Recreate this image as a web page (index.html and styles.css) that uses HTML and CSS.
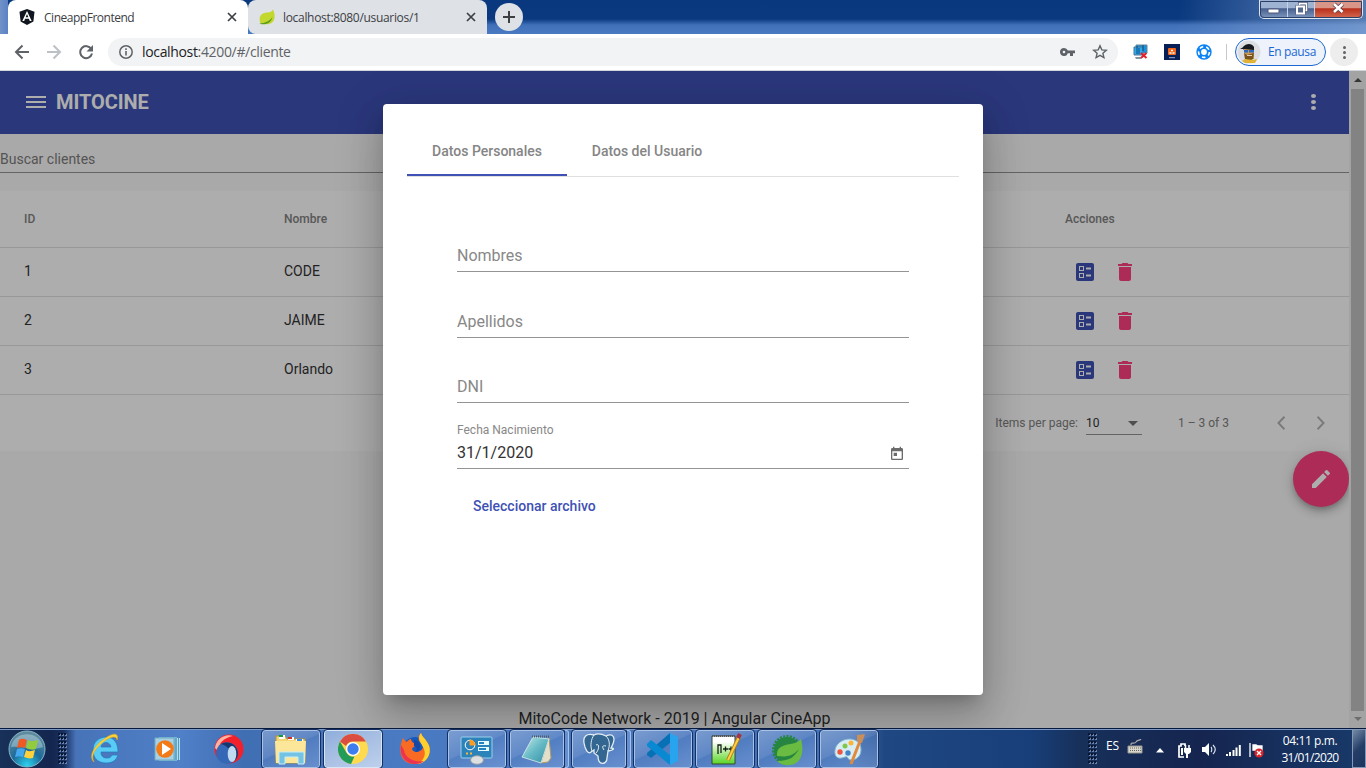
FILE: index.html
```html
<!DOCTYPE html>
<html lang="es">
<head>
<meta charset="utf-8">
<title>CineappFrontend</title>
<link rel="stylesheet" href="styles.css">
</head>
<body>
<svg class="defs" width="0" height="0">
  <defs>
    <symbol id="ballot" viewBox="0 0 24 24"><path fill-rule="evenodd" d="M13 9.500h5v-2h-5v2zm0 7h5v-2h-5v2zm6 4.500H5c-1.100 0-2-.9-2-2V5c0-1.100.9-2 2-2h14c1.100 0 2 .9 2 2v14c0 1.100-.9 2-2 2zM6 11h5V6H6v5zm1-4h3v3H7V7zM6 18h5v-5H6v5zm1-4h3v3H7v-3z"/></symbol>
    <symbol id="trash" viewBox="0 0 24 24"><path d="M6 19c0 1.100.9 2 2 2h8c1.100 0 2-.9 2-2V7H6v12zM19 4h-3.500l-1-1h-5l-1 1H5v2h14V4z"/></symbol>
    <symbol id="close" viewBox="0 0 10 10"><path d="M1 1l8 8M9 1L1 9" fill="none" stroke="#3c4043" stroke-width="1.700"/></symbol>
  </defs>
</svg>

<div class="tabstrip">
  <div class="tab active">
    <svg width="16" height="16" viewBox="0 0 16 16"><path fill="#11151d" d="M8 0l7.500 2.700-1.100 9.700L8 16l-6.400-3.600L.5 2.700z"/><path fill="#fff" fill-rule="evenodd" d="M8 2l4.700 10h-1.900l-.9-2.200H6.100L5.200 12H3.300zM8 5L6.700 8.300h2.600z"/></svg>
    <span class="tab-title t1">CineappFrontend</span>
    <svg class="x" width="10" height="10"><use href="#close"/></svg>
  </div>
  <div class="tab">
    <svg width="16" height="16" viewBox="0 0 16 16"><path fill="#c3d82e" d="M14 .5c2.500 5 2.300 11-1.500 13.500C9 16 5 15 1.500 14.500-.5 9 1 5.500 5 4c4-1 7 0 9-3.500z"/><path d="M.5 14.500c5-.5 10-2 13-6.500-1.500 6-6 8-12 7z" fill="#5d9a20"/></svg>
    <span class="tab-title t2">localhost:8080/usuarios/1</span>
    <svg class="x" width="10" height="10"><use href="#close"/></svg>
  </div>
  <div class="newtab"><svg width="12" height="12" viewBox="0 0 12 12"><path d="M6 0v12M0 6h12" stroke="#3c4043" stroke-width="2"/></svg></div>
  <div class="winbtns">
    <div class="wb min"><svg width="13" height="6" viewBox="0 0 13 6"><rect x="1" y="1" width="11" height="4" rx="1" fill="#fff" stroke="#50597a"/></svg></div>
    <div class="wb max"><svg width="13" height="13" viewBox="0 0 13 13"><path d="M4.500 1.500h7v7h-7z" fill="#7486a8" stroke="#50597a" stroke-width="3"/><path d="M4.500 1.500h7v7h-7z" fill="#7486a8" stroke="#fff" stroke-width="1.500"/><path d="M2 4.500h7v7H2z" fill="#7486a8" stroke="#50597a" stroke-width="3"/><path d="M2 4.500h7v7H2z" fill="#56698f" stroke="#fff" stroke-width="2"/></svg></div>
    <div class="wb cls"><svg width="13" height="12" viewBox="0 0 13 12"><path d="M2 2l8.500 8M10.500 2L2 10" stroke="#60404a" stroke-width="4.200"/><path d="M2 2l8.500 8M10.500 2L2 10" stroke="#fff" stroke-width="2.600"/></svg></div>
  </div>
</div>

<div class="toolbar">
  <svg class="nav" width="16" height="16" viewBox="0 0 16 16"><path d="M15 8H2M8.500 1.500L2 8l6.500 6.500" fill="none" stroke="#5f6368" stroke-width="2"/></svg>
  <svg class="nav" width="16" height="16" viewBox="0 0 16 16"><path d="M1 8h13M7.500 1.500L14 8l-6.500 6.500" fill="none" stroke="#bdc1c6" stroke-width="2"/></svg>
  <svg class="nav" width="16" height="16" viewBox="0 0 16 16"><path d="M13.300 5A6 6 0 1 0 14 9.500" fill="none" stroke="#5f6368" stroke-width="2"/><path d="M15 1v6.500H8.500z" fill="#5f6368"/></svg>
  <div class="omnibox">
    <svg width="14" height="14" viewBox="0 0 14 14"><circle cx="7" cy="7" r="6.200" fill="none" stroke="#5f6368" stroke-width="1.500"/><path d="M7 6v4.500M7 3.300v1.700" stroke="#5f6368" stroke-width="1.600"/></svg>
    <span class="url"><b>localhost</b>:4200/#/cliente</span>
    <svg class="key" width="15" height="8" viewBox="0 0 15 8"><path fill="#5f6368" fill-rule="evenodd" d="M4 0a4 4 0 1 0 3.800 5.200H10V8h3V5.200h2V2.600H7.800A4 4 0 0 0 4 0zm0 2.700a1.300 1.300 0 1 1 0 2.600 1.300 1.300 0 0 1 0-2.600z"/></svg>
    <svg width="16" height="16" viewBox="0 0 16 16"><path d="M8 1.800l1.800 4.100 4.500.4-3.400 2.900 1 4.400L8 11.300l-3.900 2.300 1-4.400L1.700 6.300l4.500-.4z" fill="none" stroke="#5f6368" stroke-width="1.400"/></svg>
  </div>
  <svg class="ext1" width="16" height="16" viewBox="0 0 16 16"><path d="M3 1h11v8H3z" fill="#1593df" stroke="#6b8291"/><path d="M1 3h9v8H1z" fill="#2aa9ef" stroke="#4b7795"/><path d="M4 2v8M6 4v6M10 1v6" stroke="#0a4b81"/><path d="M2 13h7l-1 2H3z" fill="#8295a3"/><path d="M8 9l5.500 5M13.500 9L8 14" stroke="#e4202c" stroke-width="2"/></svg>
  <svg class="ext2" width="16" height="16" viewBox="0 0 16 16"><path d="M0 0h16v16H0z" fill="#071e57"/><rect x="4" y="4" width="8" height="7" rx="1" fill="#f46518"/><path d="M5.500 9h2M8.500 9h2M7 6.500h2" stroke="#fff" stroke-width="1.500"/><path d="M5 13.700h6" stroke="#9dabcc"/></svg>
  <svg class="ext3" width="16" height="16" viewBox="0 0 16 16"><circle cx="8" cy="8" r="7.700" fill="#0b83f5"/><circle cx="8" cy="8" r="2.900" fill="#fff"/><circle cx="8" cy="8" r="5.400" fill="none" stroke="#fff" stroke-width="1.600" stroke-dasharray="3.600 3.180"/></svg>
  <div class="sep"></div>
  <div class="profile">
    <svg width="24" height="24" viewBox="0 0 24 24"><circle cx="12" cy="12" r="11.500" fill="#dcdee1"/><path d="M7 8h10v11H8z" fill="#c99852"/><path d="M6 10V7c3-4 9-4 11 0v3L7 9z" fill="#171b20"/><path d="M3 9l5-3-1 3z" fill="#171b20"/><path d="M7 10h4v2.500H7zM12 10h5v2.500h-5z" fill="#2b67bb"/><path d="M7 13l3 2 7-2-1 6-3 2-5-2z" fill="#79531f"/><path d="M5 21l3-2 8 1 4-1-2 4H8z" fill="#e0b334"/><path d="M10 15.500h5" stroke="#e5d1b2"/></svg>
    <span>En pausa</span>
  </div>
  <div class="menu"><i></i><i></i><i></i></div>
</div>

<div class="viewport">
  <div class="page">
    <div class="appbar">
      <svg width="20" height="12" viewBox="0 0 20 12"><path d="M0 1h20M0 6h20M0 11h20" stroke="#fff" stroke-width="2"/></svg>
      <span class="brand">MITOCINE</span>
      <div class="more"><i></i><i></i><i></i></div>
    </div>
    <div class="search">Buscar clientes</div>
    <div class="table">
      <div class="row head"><span>ID</span><span>Nombre</span><span>Acciones</span></div>
      <div class="row"><span>1</span><span>CODE</span><span class="acts"><svg class="edit"><use href="#ballot"/></svg><svg class="del"><use href="#trash"/></svg></span></div>
      <div class="row"><span>2</span><span>JAIME</span><span class="acts"><svg class="edit"><use href="#ballot"/></svg><svg class="del"><use href="#trash"/></svg></span></div>
      <div class="row"><span>3</span><span>Orlando</span><span class="acts"><svg class="edit"><use href="#ballot"/></svg><svg class="del"><use href="#trash"/></svg></span></div>
      <div class="paginator">
        <span class="ipp">Items per page:</span>
        <span class="select">10<i></i></span>
        <span class="range">1 – 3 of 3</span>
        <svg class="prev" width="8" height="14" viewBox="0 0 8 14"><path d="M7.500.7L1.500 7l6 6.300" fill="none" stroke="#b4b4b4" stroke-width="2"/></svg>
        <svg class="next" width="8" height="14" viewBox="0 0 8 14"><path d="M.5.7l6 6.300-6 6.300" fill="none" stroke="#b4b4b4" stroke-width="2"/></svg>
      </div>
    </div>
    <div class="fab"><svg width="24" height="24" viewBox="0 0 24 24"><path fill="#fff" d="M3 17.250V21h3.750L17.810 9.940l-3.750-3.750L3 17.250zM20.710 7.040a1 1 0 0 0 0-1.410l-2.340-2.340a1 1 0 0 0-1.410 0l-1.830 1.830 3.750 3.750 1.830-1.830z"/></svg></div>
    <div class="footer">MitoCode Network - 2019 | Angular CineApp</div>
  </div>
  <div class="scroll"><div class="up"></div><div class="thumb"></div><div class="down"></div></div>
  <div class="backdrop">
    <div class="dialog">
      <div class="tabs"><div class="dtab sel">Datos Personales</div><div class="dtab">Datos del Usuario</div></div>
      <div class="form">
        <div class="field">Nombres</div>
        <div class="field f2">Apellidos</div>
        <div class="field f3">DNI</div>
        <div class="date-label">Fecha Nacimiento</div>
        <div class="field date"><span>31/1/2020</span>
          <svg width="16" height="16" viewBox="0 0 24 24"><path fill="#6b6b6b" d="M19 3h-1V1h-2v2H8V1H6v2H5c-1.110 0-1.990.9-1.990 2L3 19c0 1.100.89 2 2 2h14c1.100 0 2-.9 2-2V5c0-1.100-.9-2-2-2zm0 16H5V8h14v11zM7 10h5v5H7z"/></svg>
        </div>
        <div class="file">Seleccionar archivo</div>
      </div>
    </div>
  </div>
</div>

<div class="taskbar">
  <div class="orb"><svg width="38" height="38" viewBox="0 0 38 38"><defs><radialGradient id="og" cx=".5" cy=".95" r=".85"><stop offset="0" stop-color="#2cd3ee"/><stop offset=".5" stop-color="#1d6a9a"/><stop offset="1" stop-color="#5d8a9f"/></radialGradient></defs><circle cx="19" cy="19" r="18" fill="url(#og)" stroke="#87b5c5"/><path d="M3 17C6 0 32 0 35 17c-9 4-22-1-32 0z" fill="#d5e8eb" opacity=".4"/><path d="M11 10c3-2 5-1 8 0l-2 8c-3-1-5-1-8 0z" fill="#ed5a24"/><path d="M20 10c3 2 6 1 10 0l-2 9c-3 1-6 1-10-1z" fill="#92cb3d"/><path d="M9 19c3-1 5-1 8 0l-2 8c-3-1-5-1-8 0z" fill="#45a8ef"/><path d="M18 20c3 2 6 1 9 0l-2 8c-3 1-6 0-9-1z" fill="#ffd13c"/></svg></div>
  <div class="grip"></div>
  <div class="quick ie"><svg width="32" height="32" viewBox="0 0 32 32"><path fill="#58ccf5" stroke="#2379be" stroke-width=".7" fill-rule="evenodd" d="M29 19H12c0 4 2 6 6 6 3 0 4-1 5-3h6c-2 6-6 8-12 8-8 0-13-5-13-13S10 4 17 4c8 0 12 6 12 15zm-7-5c-1-6-9-6-10 0z"/><path d="M5 29C-2 22 8 10 18 4c8-5 12-3 10 3C28 3 23 3 17 7 7 14 1 22 5 29z" fill="#ffd33b" stroke="#e3ac15" stroke-width=".6"/></svg></div>
  <div class="quick wmp"><svg width="30" height="26" viewBox="0 0 30 26"><path d="M9 2h17v22H9z" fill="#badde9"/><path d="M5 1h18v24H5z" fill="#72b8d5"/><path d="M1 2h19v22H1z" fill="#a7d1e3" stroke="#73abc2"/><circle cx="11" cy="13" r="8.800" fill="#f27a17"/><path d="M8 7l9 6-9 6z" fill="#fff"/><path d="M22 2v22M24.500 2v22" stroke="#4e9bc5"/></svg></div>
  <div class="quick opera"><svg width="30" height="30" viewBox="0 0 30 30"><circle cx="15" cy="15" r="14.500" fill="#f1202b"/><path d="M1 14C2 4 12-1 19 2 10 4 5 8 4 17z" fill="#ffb29f"/><circle cx="13" cy="19" r="10.800" fill="#3567b7"/><path d="M7 10c9-4 16 1 17 9 0 6-4 9-7 9 3-8-2-16-10-18z" fill="#183770"/><ellipse cx="18" cy="20" rx="4.300" ry="8" fill="#c1daf0"/></svg></div>

  <div class="tb b-exp"><svg width="34" height="32" viewBox="0 0 34 32"><path d="M2 3h9l2 3h18v24H2z" fill="#f4d673" stroke="#b79332"/><path d="M5 2h6v4H5zM14 4h6v3h-6zM22 6h7v3h-7z" fill="#fff"/><path d="M5 3h4" stroke="#119d42" stroke-width="2"/><path d="M14 5h4" stroke="#ce3426" stroke-width="2"/><path d="M23 7h5" stroke="#368cdf" stroke-width="2"/><path d="M1 8h31l-1 22H2z" fill="#fce69a"/><path d="M5 31V19h25v12h-6v-7H11v7z" fill="#75c3e3" stroke="#c6edf8"/></svg></div>
  <div class="tb b-chrome lit"><svg width="30" height="30" viewBox="0 0 30 30"><circle cx="15" cy="15" r="15" fill="#ffda4f"/><path d="M2 7.500A15 15 0 0 1 28 7.500H15A7.500 7.500 0 0 0 8 12z" fill="#dc4d41"/><path d="M2 7.500l6.500 11.300c2 3 5 4.500 8 3.700L13 30A15 15 0 0 1 2 7.500z" fill="#239c58"/><circle cx="15" cy="15" r="7" fill="#fff"/><circle cx="15" cy="15" r="5.700" fill="#3d7ded"/></svg></div>
  <div class="quick ff"><svg width="31" height="31" viewBox="0 0 31 31"><circle cx="15" cy="16" r="12" fill="#1758bd"/><path d="M3 5l3 4c2-1 3-3 5-3 0 3 4 5 6 5-1 3-4 2-5 5 1 3 5 4 8 2 5-3 3-7-1-10-1-4 0-6 2-8 1 4 4 5 6 9 7 9 0 22-12 22C-1 31-2 16 3 5z" fill="#f96b22"/><path d="M21 0c1 4 4 5 6 9 7 9 0 22-10 22 7-3 10-10 6-17-2-4-4-6-4-9 0-2 1-4 2-5z" fill="#ffd12e"/><path d="M1 12c-2 10 4 19 14 19 4 0 7-1 9-3C14 30 5 25 4 17z" fill="#ee3350"/><path d="M14 7c3 0 5 2 6 5 1 4-2 7-5 7 3-3 2-5-1-6z" fill="#1647a3"/></svg></div>
  <div class="tb b-cp"><svg width="34" height="31" viewBox="0 0 34 31"><rect x="1" y="3" width="31" height="21" rx="1" fill="#2c83ba" stroke="#9bd0eb"/><circle cx="10" cy="11" r="4.800" fill="none" stroke="#fff"/><path d="M10 11V6a5 5 0 0 1 5 5z" fill="#ff9b20" stroke="#ff9b20"/><path d="M18 9h11M18 15h11" stroke="#e7fbff" stroke-width="4"/><path d="M19 9h5M19 15h7" stroke="#2184c2" stroke-width="2"/><path d="M6 19.500h2M10 19.500h2" stroke="#ffb536" stroke-width="2"/><ellipse cx="17" cy="26" rx="6.500" ry="4.300" fill="#dce0e1" stroke="#9299a0"/></svg></div>
  <div class="tb b-note"><svg width="32" height="31" viewBox="0 0 32 31"><defs><linearGradient id="tg" x2="1" y2="1"><stop stop-color="#c4ece9"/><stop offset=".5" stop-color="#65b9c5"/><stop offset="1" stop-color="#348da3"/></linearGradient></defs><path d="M28 4l2 20-3 4-7 1z" fill="#e3dfc9" stroke="#b29a68"/><path d="M12 3l16 2-8 24L1 23z" fill="url(#tg)" stroke="#ddefed" stroke-width=".8"/><path d="M11 2.500h17" stroke="#4c5b61" stroke-width="2" stroke-dasharray="1 1"/></svg></div><div class="stack"></div>
  <div class="tb b-pg"><svg width="34" height="33" viewBox="0 0 34 33"><path d="M12 2C4 0 1 4 2 10s4 12 7 9l3-2v3l4 3c0 10 9 9 9 2l1-7c6-1 7-3 3-3 6-11 2-15-5-12-4-2-8-3-12-1z" fill="#336791" stroke="#e4edf3" stroke-width="1.300"/><path d="M12 2c-3 4-4 11-2 16M24 3c4 4 4 9 2 15M14 12c4-2 3 5 0 8M24 13c-4-1-4 1-2 4" fill="none" stroke="#e4edf3" stroke-width="1"/></svg></div><div class="stack s2"></div>
  <div class="tb b-vs"><svg width="34" height="32" viewBox="0 0 34 32"><path d="M24 0v10L5 25l-4-3v-2z" fill="#0871b5"/><path d="M1 11l4-4 19 15v10L1 13z" fill="#0989d2"/><path d="M24 0l8 4v24l-8 4z" fill="#28a4ee"/></svg></div>
  <div class="tb b-npp"><svg width="33" height="33" viewBox="0 0 33 33"><defs><linearGradient id="ng" x2="0" y2="1"><stop offset=".2" stop-color="#fff"/><stop offset="1" stop-color="#58d521"/></linearGradient></defs><path d="M3 3h23v28H3z" fill="url(#ng)" stroke="#384636"/><path d="M3 3h23" stroke="#555" stroke-width="2" stroke-dasharray="1 1"/><path d="M9 21v-9h3v8M14 16h5M16.500 13.500v5M19.500 16h5M22 13.500v5" fill="none" stroke="#182018" stroke-width="1.300"/><path d="M30 4L19 27" stroke="#b37d18" stroke-width="4"/><path d="M30 4L19 27" stroke="#ffcf43" stroke-width="2"/><path d="M31 1l-2 4" stroke="#a53342" stroke-width="4"/></svg></div>
  <div class="tb b-spring"><svg width="33" height="33" viewBox="0 0 33 33"><circle cx="16" cy="17" r="13" fill="#268641"/><circle cx="16" cy="17" r="13.500" fill="none" stroke="#268641" stroke-width="3" stroke-dasharray="2 1.300"/><path d="M30 6c2 7 2 15-1 20-5 8-17 8-23 2 14 0 18-5 22-12-7 8-14 8-22 7-1-10 8-11 14-12 5-1 7-2 10-5z" fill="#69bb42"/></svg></div>
  <div class="tb b-paint"><svg width="34" height="32" viewBox="0 0 34 32"><path d="M3 17C5 6 21 2 28 11c3 9-1 16-9 16-4 0-2-4-6-3-7 3-11 0-10-7z" fill="#d9edf5" stroke="#83b5d0"/><circle cx="8" cy="19" r="2.700" fill="#eb5641"/><circle cx="13" cy="13" r="2.500" fill="#7fc84c"/><circle cx="19" cy="10" r="2.500" fill="#f8b536"/><circle cx="16" cy="20" r="2.700" fill="#4383c7"/><path d="M28 8l-9 23" stroke="#e18a3c" stroke-width="3"/><path d="M25 2l8-1-3 9-5-2z" fill="#c98e59"/></svg></div>

  <div class="grip g2"></div>
  <span class="lang">ES</span>
  <svg class="kbd" width="16" height="15" viewBox="0 0 16 15"><path d="M1 7h14v7H1z" fill="#d9d7cd" stroke="#96968f"/><path d="M3 9h11M3 11.500h11" stroke="#5f635f" stroke-dasharray="1 1"/><path d="M4 6c0-4 3 0 5-3 1-2 3-1 5-3" fill="none" stroke="#aaa" stroke-width="1.300"/></svg>
  <svg class="arr" width="8" height="5" viewBox="0 0 8 5"><path d="M4 0l4 4.500H0z" fill="#fff"/></svg>
  <svg class="bat" width="14" height="15" viewBox="0 0 14 15"><path d="M7 14H2V3h2V1h4v2" fill="none" stroke="#fff" stroke-width="1.700"/><path d="M4 5h2v7H4zM7 5h7v4l-2 2h-1v4H9v-4L7 9z" fill="#fff"/><path d="M8.500 2v3M12 2v3" stroke="#fff" stroke-width="1.500"/></svg>
  <svg class="snd" width="15" height="13" viewBox="0 0 15 13"><path d="M0 4h3l4-4v13L3 9H0z" fill="#fff"/><path d="M9 4c1 1 1 4 0 5M11 2c3 3 3 6 0 9" fill="none" stroke="#d6dfeb" stroke-width="1.200"/></svg>
  <svg class="sig" width="15" height="12" viewBox="0 0 15 12"><path d="M0 10h2v2H0zM3 8h2v4H3zM6.500 6h2v6h-2zM9.500 3.500h2V12h-2zM12.800 1h2v11h-2z" fill="#fff"/></svg>
  <svg class="flag" width="15" height="15" viewBox="0 0 15 15"><path d="M1 0v14M4 2h3l2 1h4v5H7L6 7H4z" fill="#fff" stroke="#fff" stroke-width="1.300"/><circle cx="10" cy="10" r="4.500" fill="#d92429"/><path d="M8 8l4 4M12 8l-4 4" stroke="#fff" stroke-width="1.400"/></svg>
  <div class="clock"><span>04:11 p.m.</span><span class="d">31/01/2020</span></div>
  <div class="peek"></div>
</div>
</body>
</html>
```
FILE: styles.css
```css
* { box-sizing: border-box; }
body { margin: 0; width: 1366px; height: 768px; overflow: hidden; display: flex; flex-direction: column; font-family: Roboto, "Liberation Sans", sans-serif; }
svg { display: block; flex: none; }
.defs { position: absolute; }

.tabstrip { height: 34px; flex: none; display: flex; padding-left: 8px; background: linear-gradient(90deg, #7092c8 0, #5c82c4 8px, transparent 8px), linear-gradient(100deg, transparent 86%, #88a5d555 92%, #9ab6df88 100%), linear-gradient(#0a387e 0, #0a397f 19px, #4070b8 25px, #4a7ac2 34px); font-family: "Open Sans", "Noto Sans", sans-serif; }
.tab { display: flex; align-items: center; width: 240px; padding: 0 11px; background: #dee1e6; font-size: 12px; color: #3c4043; }
.tab.active { background: #fff; border-radius: 8px 8px 0 0; }
.tab:not(.active) { width: 239px; border-radius: 8px 8px 0 8px; }
.tab-title { flex: 1; margin-left: 9px; white-space: nowrap; }
.t1 { letter-spacing: -.48px; }
.t2 { letter-spacing: -.32px; margin-left: 8px; }
.newtab { width: 28px; height: 28px; margin: 3px 0 0 8px; border-radius: 50%; background: #dee1e6; display: flex; align-items: center; justify-content: center; }
.winbtns { margin-left: auto; margin-right: 3px; width: 104px; height: 19px; display: flex; border: 1px solid #dce6f3; outline: 1px solid #2b4069; outline-offset: -2px; border-top: 0; border-radius: 0 0 5px 5px; overflow: hidden; }
.wb { width: 28px; display: flex; align-items: center; justify-content: center; padding-bottom: 2px; background: linear-gradient(#9eb2d1 0 45%, #475f8e 48%, #7d98bf); border-right: 1px solid #c5d3e7; }
.max { width: 27px; }
.cls { flex: 1; border: 0; background: linear-gradient(#d89689 0 45%, #b82f1b 48%, #d56a50); }
.min svg { margin-top: 5px; }

.toolbar { height: 37px; flex: none; display: flex; align-items: center; padding-left: 14px; border-bottom: 1px solid #d2d5d9; background: #fff; font-family: "Open Sans", "Noto Sans", sans-serif; }
.nav { margin-right: 16px; }
.omnibox { width: 1010px; height: 28px; margin-left: -2px; border-radius: 14px; background: #f1f3f4; display: flex; align-items: center; padding: 0 10px 0 11px; }
.url { flex: 1; margin: 0 0 2px 9px; font-size: 14px; letter-spacing: -.34px; color: #5f6368; }
.url b { font-weight: 400; color: #202124; }
.key { margin-right: 17px; }
.ext1 { margin-left: 15px; }
.ext2 { margin-left: 15px; }
.ext3 { margin-left: 16px; }
.sep { width: 1px; height: 16px; margin: 0 8px 0 14px; background: #c5c8cc; }
.profile { width: 91px; height: 28px; border: 1px solid #1a67d2; border-radius: 14px; background: #edf2fb; display: flex; align-items: center; padding-left: 1px; font-size: 12px; letter-spacing: -.37px; color: #1a67d2; white-space: nowrap; }
.profile span { margin: 0 0 1px 7px; }
.menu { width: 28px; height: 28px; border-radius: 50%; margin-left: 4px; background: #ededed; display: flex; flex-direction: column; align-items: center; justify-content: center; gap: 2px; }
.menu i { width: 3px; height: 3px; border-radius: 50%; background: #5f6368; }

.viewport { position: relative; height: 657px; flex: none; display: flex; overflow: hidden; }
.page { width: 1349px; background: #fafafa; display: flex; flex-direction: column; color: #333; }
.appbar { height: 63px; background: #3f51b5; color: #fff; display: flex; align-items: center; padding: 0 33px 2px 26px; }
.brand { margin-left: 10px; font-weight: 700; font-size: 20px; letter-spacing: -.08px; }
.more { margin-left: auto; display: flex; flex-direction: column; gap: 2px; }
.more i { width: 5px; height: 4px; border-radius: 50%; background: #fff; }
.search { height: 39px; border-bottom: 1px solid #949494; font-size: 14px; line-height: 16px; padding-top: 17px; color: #7c7c7c; }
.table { margin-top: 18px; background: #fff; }
.row { display: grid; grid-template-columns: 260px 781px 1fr; height: 49px; padding-left: 24px; align-items: center; border-bottom: 1px solid #e0e0e0; font-size: 14px; }
.row:not(.head) > span:not(.acts) { padding-bottom: 2px; }
.row.head { height: 57px; font-size: 12px; font-weight: 500; color: #828282; }
.acts { display: flex; gap: 16px; padding-left: 8px; }
.acts svg { width: 24px; height: 24px; }
.edit { fill: #3f51b5; }
.del { fill: #ff4081; }
.paginator { height: 56px; display: flex; align-items: center; justify-content: flex-end; padding-right: 24px; font-size: 12px; color: #808080; }
.select { width: 56px; height: 24px; margin: 0 36px 0 8px; padding-right: 4px; border-bottom: 1px solid #949494; color: #333; display: flex; align-items: center; justify-content: space-between; letter-spacing: .1px; }
.select i { border: 5px solid transparent; border-top-color: #757575; border-bottom: 0; margin-top: 1px; }
.prev { margin-left: 48px; }
.next { margin-left: 32px; }
.fab { align-self: flex-end; width: 56px; height: 56px; border-radius: 50%; background: #ff4081; display: flex; align-items: center; justify-content: center; box-shadow: 0 3px 5px -1px rgba(0,0,0,.2), 0 6px 10px rgba(0,0,0,.14), 0 1px 18px rgba(0,0,0,.12); }
.footer { margin-top: auto; text-align: center; font-size: 16px; line-height: 18px; }
.scroll { width: 17px; background: #f1f1f1; display: flex; flex-direction: column; align-items: center; }
.up, .down { border: 4px solid transparent; }
.up { margin: 7px 0 7px; border-bottom: 4px solid #505050; border-top: 0; }
.thumb { width: 13px; flex: 1; background: #c1c1c1; }
.down { margin: 6px 0 7px; border-top: 4px solid #a3a3a3; border-bottom: 0; }
.backdrop { position: absolute; inset: 0; background: rgba(0,0,0,.32); display: flex; align-items: flex-start; justify-content: center; padding-top: 33px; }
.dialog { width: 600px; height: 591px; background: #fff; border-radius: 4px; padding: 24px; box-shadow: 0 11px 15px -7px rgba(0,0,0,.2), 0 24px 38px 3px rgba(0,0,0,.14), 0 9px 46px 8px rgba(0,0,0,.12); }
.tabs { display: flex; height: 49px; border-bottom: 1px solid #e0e0e0; }
.dtab { width: 160px; height: 48px; padding-bottom: 2px; display: flex; align-items: center; justify-content: center; font-size: 14px; font-weight: 500; color: #858585; }
.sel { border-bottom: 2px solid #3f51b5; padding: 0; }
.form { padding: 64px 50px 0; display: flex; flex-direction: column; font-size: 16px; }
.field { height: 31px; border-bottom: 1px solid #949494; color: #888; line-height: 18px; padding-top: 6px; }
.f2 { margin-top: 35px; }
.f3 { margin-top: 34px; }
.date-label { margin-top: 19px; height: 16px; line-height: 16px; font-size: 12px; color: #888; }
.field.date { color: #333; display: flex; justify-content: space-between; padding-right: 4px; }
.date svg { margin-top: 2px; }
.file { margin: 29px 0 0 16px; line-height: 16px; font-size: 14px; font-weight: 500; color: #3f51b5; }

.taskbar { height: 40px; flex: none; display: flex; align-items: center; border-top: 1px solid #071a3d; box-shadow: inset 0 1px #7c98c5; background: linear-gradient(90deg, #183158 0, #14264f 52px, #18305f 64px, #4773b8 76px, #5080c8 180px, #406eb3 245px, #4a7bc2 400px, #4172b9 800px, #4673b3 850px, #1f4782 885px, #183f7a 1030px, #17305a 1080px, #15254f 1200px, #183a6a 1366px); font-family: "Open Sans", "Noto Sans", sans-serif; }
.orb { margin-left: 8px; width: 38px; }
.grip { width: 9px; height: 31px; margin-left: 12px; background-image: radial-gradient(circle at 1px 1px, #091735 1px, transparent 1.200px), radial-gradient(circle at 2px 2px, #6882a9 .8px, transparent 1px); background-size: 3px 4px; }
.quick { display: flex; align-items: center; justify-content: center; width: 32px; }
.ie { margin-left: 22px; }
.wmp { margin-left: 32px; }
.opera { margin-left: 28px; }
.tb { width: 58px; height: 38px; margin-top: 1px; margin-left: 4px; border: 1px solid #a8c1e5; outline: 1px solid #142f60; border-radius: 3px; background: linear-gradient(155deg, #9bb4dc99 0, #7899d088 45%, #5b84c588 48%, #7fa1db99); display: flex; align-items: center; justify-content: center; }
.lit { background: linear-gradient(155deg, #8faedb, #a9c0e3 50%, #bdd0ed); border-color: #d8e5f5; }
.b-exp { margin-left: 17px; }
.ff { margin-left: 17px; margin-right: 13px; }
.b-note, .b-pg { width: 54px; }
.stack { width: 5px; height: 38px; margin-top: 1px; background: #658fce; border: 1px solid #a8c1e5; border-left: 1px solid #142f60; border-radius: 0 3px 3px 0; }
.b-pg { margin-left: 3px; }
.b-vs { margin-left: 3px; }
.g2 { margin-left: 210px; }
.lang { width: 21px; margin-left: 9px; color: #fff; font-size: 12px; letter-spacing: -.1px; margin-top: -6px; }
.kbd { margin-top: -5px; }
.arr { margin-left: 13px; margin-top: 3px; }
.bat { margin-left: 13px; margin-top: 3px; }
.snd { margin-left: 11px; margin-top: 2px; }
.sig { margin-left: 9px; margin-top: 2px; }
.flag { margin-left: 8px; margin-top: 3px; }
.clock { width: 62px; margin-left: 15px; color: #fff; font-size: 12px; line-height: 17px; letter-spacing: -.4px; text-align: center; display: flex; flex-direction: column; white-space: nowrap; }
.clock .d { letter-spacing: -.65px; }
.peek { width: 14px; height: 39px; margin-left: auto; border: 1px solid #8498b4; background: linear-gradient(135deg, #758aa7, #243e67 50%, #1c355e); }
```
